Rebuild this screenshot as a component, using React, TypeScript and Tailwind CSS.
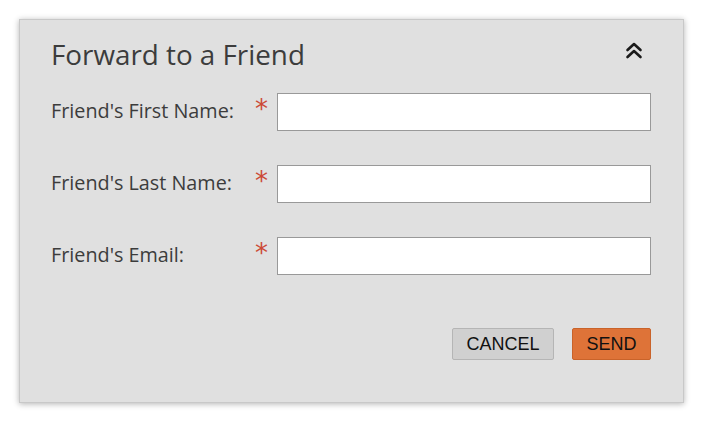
export default function App() {
  const fields = ["Friend's First Name:", "Friend's Last Name:", "Friend's Email:"];

  return (
    <div className="w-[707px] h-[426px] bg-white pt-[19px] pl-[19px]">
      <div className="w-[665px] h-[384px] bg-[#e0e0e0] border border-[#c8c8c8] shadow-[0_1px_6px_rgba(0,0,0,0.3)] pl-[31px] pr-[32px] pt-[16px] font-['Open_Sans',sans-serif] text-[#3c3c3c]">
        <div className="flex items-center justify-between h-[36px]">
          <h2 className="text-[27.8px] leading-[36px]">Forward to a Friend</h2>
          <svg width="18" height="19" viewBox="0 0 18 19" className="mr-[8px] mt-[-8px]">
            <path d="M2.5 9 L9 3 L15.5 9" fill="none" stroke="#1a1a1a" strokeWidth="2.6" strokeLinecap="round" strokeLinejoin="round" />
            <path d="M2.5 16 L9 10 L15.5 16" fill="none" stroke="#1a1a1a" strokeWidth="2.6" strokeLinecap="round" strokeLinejoin="round" />
          </svg>
        </div>
        <div className="mt-[21px] flex flex-col gap-[34px]">
          {fields.map((label) => (
            <div key={label} className="flex items-center h-[38px]">
              <span className="w-[204px] text-[19.8px] leading-[38px] pb-[2px]">{label}</span>
              <span className="w-[22px] text-[#cc4a36] text-[26px] leading-none pb-[7px] font-['DejaVu_Sans',sans-serif]">*</span>
              <input className="w-[374px] h-[38px] bg-white border border-[#999] outline-none" />
            </div>
          ))}
        </div>
        <div className="mt-[53px] flex justify-end gap-[18px] font-['Liberation_Sans',sans-serif] text-[18px] text-[#111]">
          <button className="w-[102px] h-[32px] bg-[#d0d0d0] border border-[#b5b5b5] rounded-[2px]">CANCEL</button>
          <button className="w-[79px] h-[32px] bg-[#de7338] border border-[#c9632a] rounded-[2px]">SEND</button>
        </div>
      </div>
    </div>
  );
}
